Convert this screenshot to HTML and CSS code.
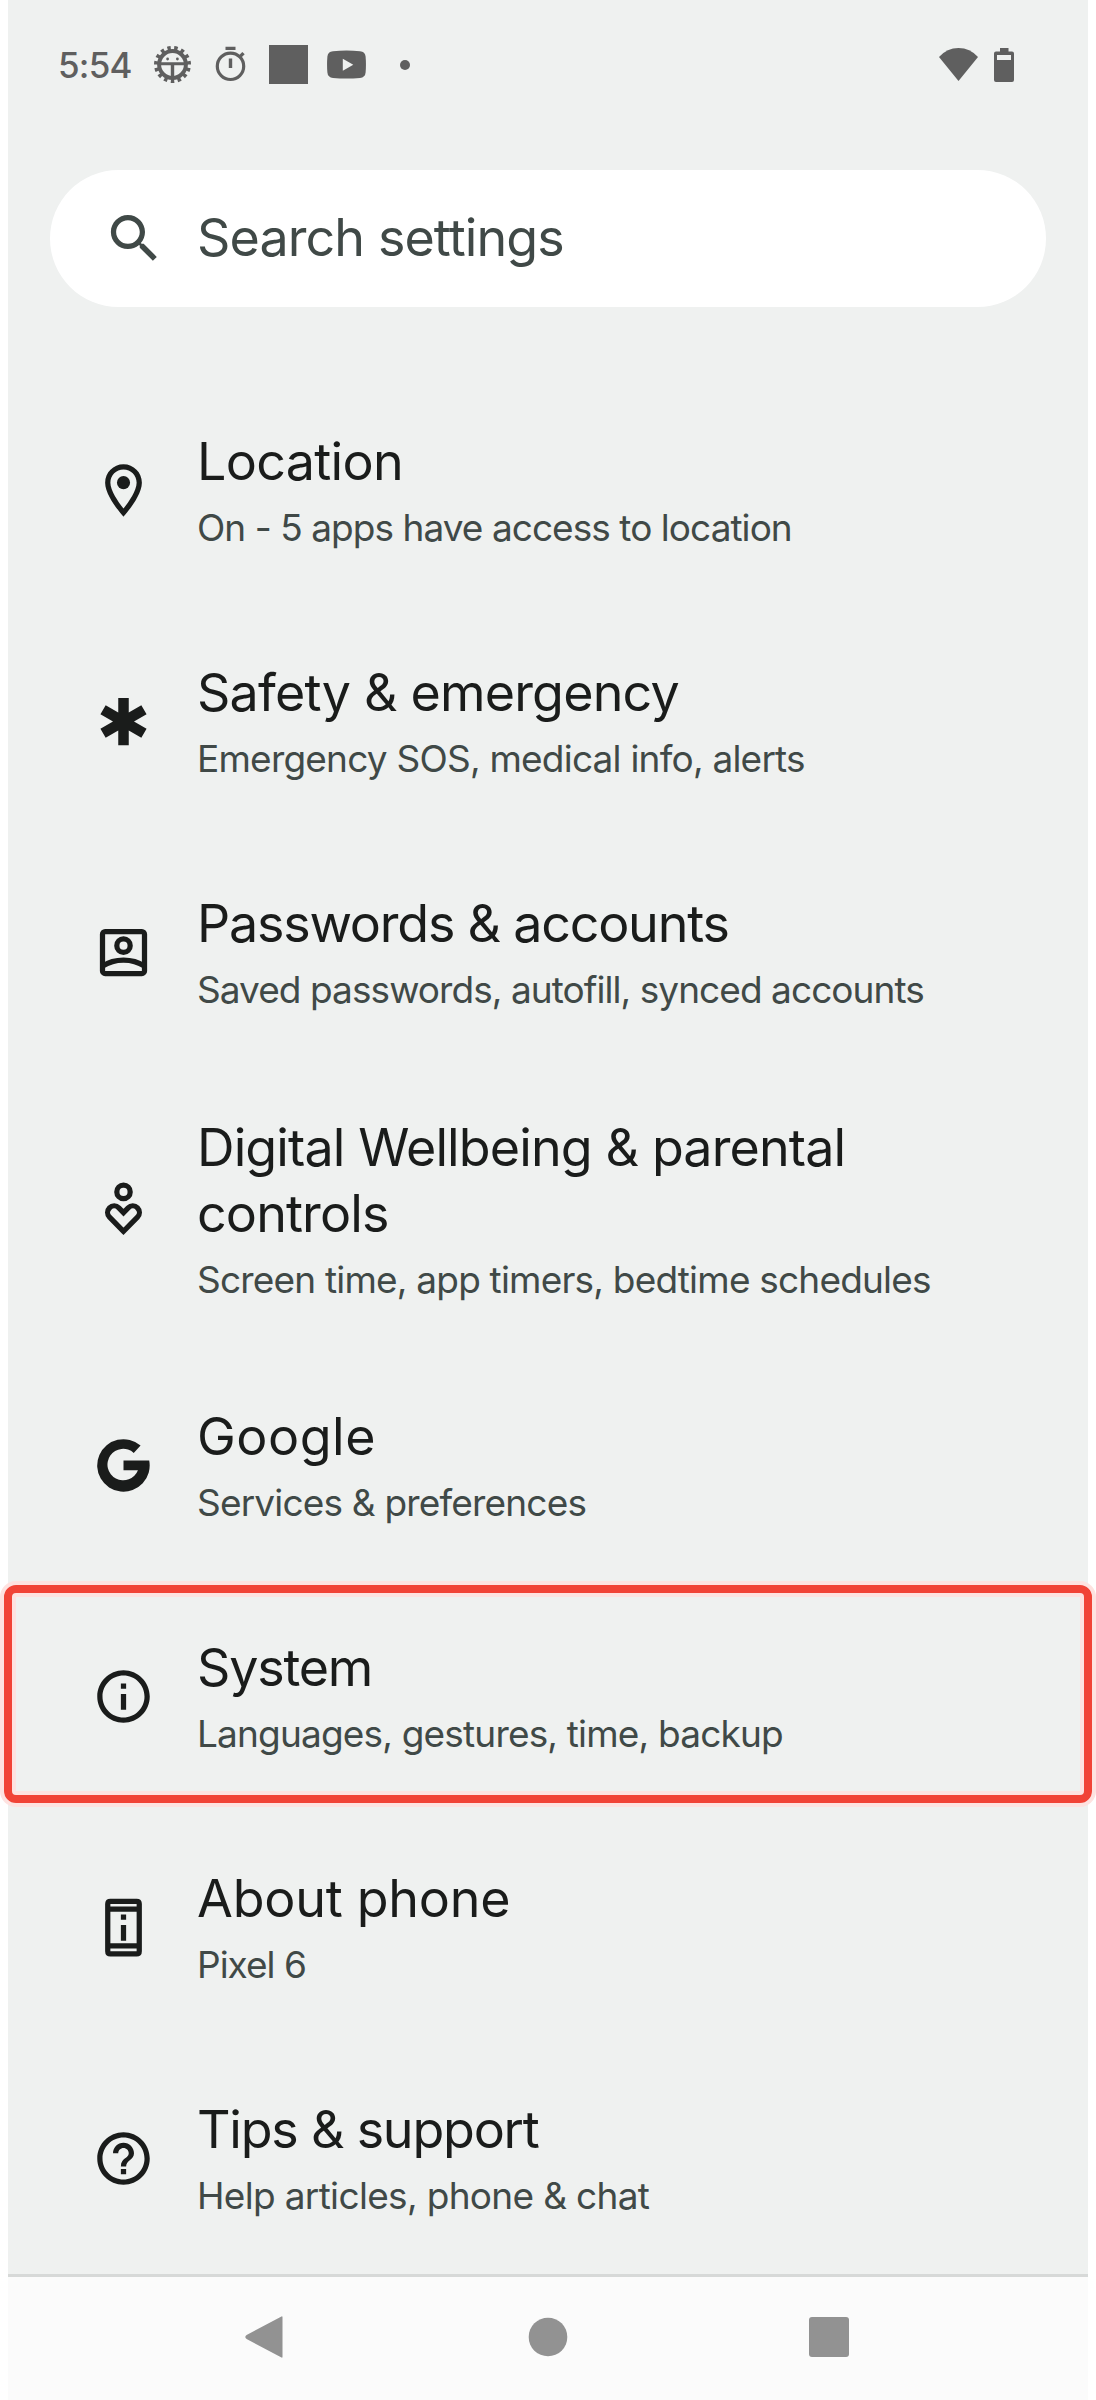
FILE: index.html
```html
<!DOCTYPE html>
<html lang="en">
<head>
<meta charset="utf-8">
<title>Settings</title>
<link rel="stylesheet" href="styles.css">
</head>
<body>
<div class="phone">
  <header class="status">
    <span class="clock">5:54</span>
    <div class="notifications">
      <svg class="status-icon" viewBox="0 0 39 39">
        <circle class="teeth" cx="19.5" cy="19.500" r="16" pathLength="30" transform="rotate(84 19.5 19.5)"/>
        <circle class="line" cx="19.5" cy="19.500" r="13.4" stroke-width="4"/>
        <path d="M7 17.200h25v3H7zM17.800 19h3.400v13h-3.400z"/>
        <circle cx="14.6" cy="14" r="1.4"/><circle cx="24.4" cy="14" r="1.4"/>
      </svg>
      <svg class="status-icon" viewBox="0 0 39 39">
        <circle class="line" cx="19.5" cy="21.3" r="13.2" stroke-width="3.2"/>
        <path d="M14.5 1.800h10v3.200h-10zM17.8 13.400h3.400v9.600h-3.400z"/>
        <path class="line" d="M29 11.600l3.500-3.500" stroke-width="3.4"/>
      </svg>
      <span class="block"></span>
      <svg class="status-icon" viewBox="0 0 39 39">
        <path fill-rule="evenodd" d="M6 6.200Q19.5 5 33 6.200Q38.2 6.600 38.6 11.600Q39.3 19.600 38.6 27.600Q38.2 32.600 33 33Q19.5 34.200 6 33Q.8 32.600 .4 27.600Q-.3 19.600 .4 11.600Q.8 6.600 6 6.200ZM15.8 13.800V25.800L26.3 19.800Z"/>
      </svg>
      <span class="dot"></span>
    </div>
    <div class="indicators">
      <svg class="wifi" viewBox="0 0 39 33"><path d="M0 9Q8 0 19.5 0T39 9L19.5 33Z"/></svg>
      <svg class="battery" viewBox="0 0 20 34"><path fill-rule="evenodd" d="M6 0h8.5v3.5H18q2 0 2 2V32q0 2-2 2H2q-2 0-2-2V5.500q0-2 2-2h4zM3 7v5h14V7z"/></svg>
    </div>
  </header>

  <div class="search">
    <svg class="search-icon" viewBox="0 0 24 24"><path d="M15.5 14h-.79l-.28-.27C15.41 12.59 16 11.11 16 9.500 16 5.910 13.090 3 9.500 3S3 5.910 3 9.500 5.910 16 9.500 16c1.610 0 3.090-.59 4.230-1.570l.27.28v.79l5 4.990L20.490 19l-4.990-5zm-6 0C7.010 14 5 11.990 5 9.500S7.010 5 9.500 5 14 7.010 14 9.500 11.990 14 9.500 14z"/></svg>
    <span class="search-label">Search settings</span>
  </div>

  <main class="list">
    <section class="row row-location">
      <svg class="icon" viewBox="0 0 24 24"><path d="M12 2C8.130 2 5 5.130 5 9c0 5.250 7 13 7 13s7-7.750 7-13c0-3.870-3.130-7-7-7zM7 9c0-2.760 2.240-5 5-5s5 2.240 5 5c0 2.880-2.880 7.190-5 9.880C9.920 16.210 7 11.850 7 9z"/><circle cx="12" cy="9" r="2.5"/></svg>
      <div class="text"><h2>Location</h2><p>On - 5 apps have access to location</p></div>
    </section>
    <section class="row row-safety">
      <svg class="icon" viewBox="0 0 24 24"><path d="M20.790 9.230l-2-3.460L14 8.540V3h-4v5.540L5.210 5.770l-2 3.460L8 12l-4.790 2.770 2 3.460L10 15.460V21h4v-5.540l4.790 2.770 2-3.460L16 12z"/></svg>
      <div class="text"><h2>Safety &amp; emergency</h2><p>Emergency SOS, medical info, alerts</p></div>
    </section>
    <section class="row row-passwords">
      <svg class="icon outline" viewBox="0 0 24 24"><rect x="4" y="4" width="16" height="16" rx="1"/><circle cx="12" cy="9.400" r="2.550"/><path d="M4 17.200Q7.500 14.900 12 14.900T20 17.200"/></svg>
      <div class="text"><h2>Passwords &amp; accounts</h2><p>Saved passwords, autofill, synced accounts</p></div>
    </section>
    <section class="row row-wellbeing">
      <svg class="icon outline" viewBox="0 0 24 24"><circle cx="12" cy="5.300" r="2.550"/><path d="M12 20.300L6.680 14.920A2.500 2.500 0 0 1 10.220 11.380L12 13.200L13.780 11.380A2.500 2.500 0 0 1 17.320 14.920Z"/></svg>
      <div class="text"><h2>Digital Wellbeing &amp; parental controls</h2><p>Screen time, app timers, bedtime schedules</p></div>
    </section>
    <section class="row row-google">
      <svg class="icon" viewBox="0 0 24 24"><path d="M12 10.100H21.800A10 10 0 1 1 18.500 4.400L15.900 7.200A6 6 0 1 0 17.500 13.800H12Z"/></svg>
      <div class="text"><h2>Google</h2><p>Services &amp; preferences</p></div>
    </section>
    <section class="row row-system">
      <svg class="icon" viewBox="0 0 24 24"><path d="M11 7h2v2h-2zm0 4h2v6h-2zm1-9C6.480 2 2 6.480 2 12s4.480 10 10 10 10-4.480 10-10S17.520 2 12 2zm0 18c-4.410 0-8-3.590-8-8s3.590-8 8-8 8 3.590 8 8-3.590 8-8 8z"/></svg>
      <div class="text"><h2>System</h2><p>Languages, gestures, time, backup</p></div>
      <div class="highlight"></div>
    </section>
    <section class="row row-about">
      <svg class="icon" viewBox="0 0 24 24"><path fill-rule="evenodd" d="M7 1h10q2 0 2 2v18q0 2-2 2H7q-2 0-2-2V3q0-2 2-2zM7 3v1h10V3zM7 6v12h10V6zM7 20v1h10v-1z"/><path d="M11 7h2v2h-2zM11 11h2v6h-2z"/></svg>
      <div class="text"><h2>About phone</h2><p>Pixel 6</p></div>
    </section>
    <section class="row row-tips">
      <svg class="icon" viewBox="0 0 24 24"><path d="M11 16h2v2h-2zm1-14C6.480 2 2 6.480 2 12s4.480 10 10 10 10-4.480 10-10S17.520 2 12 2zm0 18c-4.410 0-8-3.590-8-8s3.590-8 8-8 8 3.590 8 8-3.590 8-8 8zm0-14c-2.210 0-4 1.790-4 4h2c0-1.100.9-2 2-2s2 .9 2 2c0 2-3 1.750-3 5h2c0-2.250 3-2.500 3-5 0-2.210-1.790-4-4-4z"/></svg>
      <div class="text"><h2>Tips &amp; support</h2><p>Help articles, phone &amp; chat</p></div>
    </section>
  </main>

  <nav class="navbar">
    <svg viewBox="0 0 44 44"><path d="M37.500 2.200V41.800Q37.500 43.500 36 42.300L1.600 24Q-1 22 1.600 20L36 1.700Q37.500 .5 37.500 2.200Z"/></svg>
    <svg viewBox="0 0 44 44"><circle cx="22" cy="22" r="19.300"/></svg>
    <svg viewBox="0 0 44 44"><rect x="2" y="2" width="40" height="40" rx="3"/></svg>
  </nav>
</div>
</body>
</html>
```
FILE: styles.css
```css
* { box-sizing: border-box; }

body {
  margin: 0;
  background: #fff;
  font-family: Inter, "Open Sans", sans-serif;
}

.phone {
  display: flex;
  flex-direction: column;
  width: 1080px;
  height: 2400px;
  margin: 0 auto;
  background: #eff1f0;
}

/* Status bar */
.status {
  display: flex;
  align-items: center;
  height: 129px;
  padding: 0 74px 0 50px;
  color: #5f5f5f;
}
.clock {
  width: 95px;
  font-size: 35px;
  font-weight: 500;
  line-height: 40px;
  letter-spacing: -0.8px;
}
.notifications { display: flex; align-items: center; gap: 19px; }
.status-icon { width: 39px; height: 39px; fill: currentColor; }
.status-icon .line { fill: none; stroke: currentColor; }
.status-icon .teeth {
  fill: none;
  stroke: currentColor;
  stroke-width: 5;
  stroke-dasharray: 1 1;
}
.block { width: 39px; height: 39px; background: currentColor; }
.dot {
  width: 10px;
  height: 10px;
  margin-left: 15px;
  border-radius: 50%;
  background: currentColor;
}
.indicators { display: flex; align-items: center; gap: 16px; margin-left: auto; }
.wifi { width: 39px; height: 33px; fill: currentColor; }
.battery { width: 20px; height: 34px; fill: currentColor; }

/* Search field */
.search {
  display: flex;
  align-items: center;
  height: 137px;
  margin: 41px 42px 68px;
  padding-left: 53px;
  border-radius: 69px;
  background: #fff;
  color: #404947;
}
.search-icon { width: 63px; height: 63px; fill: currentColor; }
.search-label {
  margin-left: 31px;
  padding-bottom: 2px;
  font-size: 52px;
  line-height: 66px;
  letter-spacing: -0.9px;
}

/* Settings list */
.list { flex: none; color: #1a1c1b; }
.row {
  position: relative;
  display: flex;
  align-items: center;
  height: 231px;
  padding: 0 84px;
}
.icon { flex: none; width: 63px; height: 63px; margin-right: 42px; fill: currentColor; }
.outline { fill: none; stroke: currentColor; stroke-width: 2; }
h2 {
  width: 700px;
  margin: 0;
  font-size: 52px;
  font-weight: 400;
  line-height: 66px;
}
p {
  margin: 0;
  padding-top: 8px;
  color: #404947;
  font-size: 37px;
  line-height: 49px;
  letter-spacing: -0.82px;
  white-space: nowrap;
}
.row-location h2 { letter-spacing: -0.7px; }
.row-location p { letter-spacing: -0.95px; }
.row-safety h2 { letter-spacing: -0.8px; }
.row-safety p { letter-spacing: -0.78px; }
.row-passwords h2 { letter-spacing: -1.22px; }
.row-passwords p { letter-spacing: -0.94px; }
.row-wellbeing { height: 282px; }
.row-wellbeing h2 { letter-spacing: -0.88px; }
.row-wellbeing p { letter-spacing: -0.8px; }
.row-google h2 { letter-spacing: 0.5px; }
.row-system h2 { letter-spacing: -1.2px; }
.row-about h2 { letter-spacing: -0.25px; }
.row-about p { letter-spacing: -1px; }
.row-tips h2 { letter-spacing: -1.22px; }
.row-tips p { letter-spacing: -0.67px; }

.highlight {
  position: absolute;
  top: 4px;
  left: -4px;
  right: -4px;
  height: 218px;
  border: 8px solid #f14336;
  border-radius: 12px;
  box-shadow: 0 0 0 4px #fee2e0, inset 0 0 0 4px #fee2e0;
}

/* Navigation bar */
.navbar {
  display: flex;
  justify-content: center;
  gap: 237px;
  flex: 1;
  padding-top: 38px;
  border-top: 3px solid #d7d9d8;
  background: #fbfbfb;
}
.navbar svg { width: 44px; height: 44px; fill: #929292; }
```
